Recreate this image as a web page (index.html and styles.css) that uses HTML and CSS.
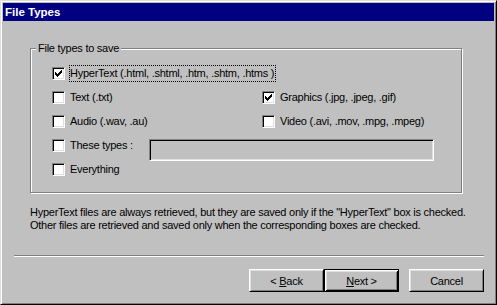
FILE: index.html
```html
<!DOCTYPE html>
<html>
<head>
<meta charset="utf-8">
<title>File Types</title>
<link rel="stylesheet" href="styles.css">
</head>
<body>
<div class="window">
  <div class="titlebar">File Types</div>
  <div class="body">
    <div class="group">
      <span class="legend">File types to save</span>
      <div class="grid">
        <label class="opt span2"><span class="cb"><svg viewBox="0 0 7 7" width="7" height="7" shape-rendering="crispEdges"><path d="M6 0h1v1h-1zM5 1h2v1h-2zM0 2h1v1h-1zM4 2h3v1h-3zM0 3h2v1h-2zM3 3h3v1h-3zM0 4h5v1h-5zM1 5h3v1h-3zM2 6h1v1h-1z" fill="#000"/></svg></span><span class="lbl focus">HyperText (.html, .shtml, .htm, .shtm, .htms )</span></label>
        <label class="opt"><span class="cb"></span><span class="lbl">Text (.txt)</span></label>
        <label class="opt"><span class="cb"><svg viewBox="0 0 7 7" width="7" height="7" shape-rendering="crispEdges"><path d="M6 0h1v1h-1zM5 1h2v1h-2zM0 2h1v1h-1zM4 2h3v1h-3zM0 3h2v1h-2zM3 3h3v1h-3zM0 4h5v1h-5zM1 5h3v1h-3zM2 6h1v1h-1z" fill="#000"/></svg></span><span class="lbl">Graphics (.jpg, .jpeg, .gif)</span></label>
        <label class="opt"><span class="cb"></span><span class="lbl">Audio (.wav, .au)</span></label>
        <label class="opt"><span class="cb"></span><span class="lbl">Video (.avi, .mov, .mpg, .mpeg)</span></label>
        <div class="opt span2"><span class="cb"></span><span class="lbl types-lbl">These types :</span><span class="edit"></span></div>
        <label class="opt span2"><span class="cb"></span><span class="lbl">Everything</span></label>
      </div>
    </div>
    <p class="desc">HyperText files are always retrieved, but they are saved only if the "HyperText" box is checked.<br>Other files are retrieved and saved only when the corresponding boxes are checked.</p>
    <div class="sep"></div>
    <div class="buttons">
      <button class="btn">&lt; <u>B</u>ack</button>
      <button class="btn default"><u>N</u>ext &gt;</button>
      <button class="btn cancel">Cancel</button>
    </div>
  </div>
</div>
</body>
</html>
```

FILE: styles.css
```css
html, body {
  margin: 0;
  padding: 0;
  background: #c0c0c0;
}

body {
  font-family: "Liberation Sans", Arial, sans-serif;
  font-size: 11px;
  letter-spacing: -0.25px;
  color: #000;
}

.window {
  width: 497px;
  height: 305px;
  box-sizing: border-box;
  border: 1px solid;
  border-color: #dfdfdf #000 #000 #dfdfdf;
  box-shadow: inset 1px 1px 0 #fff, inset -1px -1px 0 #808080;
  padding: 2px;
  background: #c0c0c0;
}

.titlebar {
  height: 18px;
  line-height: 18px;
  background: #000080;
  color: #fff;
  font-weight: bold;
  font-size: 11.5px;
  letter-spacing: 0;
  padding-left: 2px;
}

.body {
  display: flex;
  flex-direction: column;
}

.group {
  position: relative;
  margin: 27px 0 0 27px;
  width: 432px;
  height: 145px;
  box-sizing: border-box;
  border: 1px solid #808080;
  box-shadow: 1px 1px 0 #fff, inset 1px 1px 0 #fff;
  padding: 18px 0 0 21px;
}

.legend {
  position: absolute;
  top: -7px;
  left: 5px;
  padding: 0 2px;
  line-height: 13px;
  background: #c0c0c0;
}

.grid {
  display: grid;
  grid-template-columns: 210px auto;
  grid-auto-rows: 13px;
  row-gap: 11px;
}

.span2 {
  grid-column: span 2;
}

.opt {
  display: flex;
  align-items: center;
  gap: 5px;
}

.cb {
  width: 13px;
  height: 13px;
  box-sizing: border-box;
  border: 1px solid;
  border-color: #808080 #fff #fff #808080;
  box-shadow: inset 1px 1px 0 #000, inset -1px -1px 0 #dfdfdf;
  background: #fff;
  padding: 2px;
  display: flex;
  flex: none;
}

.cb svg {
  display: block;
}

.lbl {
  line-height: 13px;
  white-space: nowrap;
}

.lbl.focus {
  border: 1px dotted #000;
  padding: 1px 1px 1px 0;
  margin-left: -1px;
}

.types-lbl {
  width: 74px;
}

.edit {
  align-self: flex-start;
  width: 285px;
  height: 22px;
  box-sizing: border-box;
  border: 1px solid;
  border-color: #808080 #fff #fff #808080;
  box-shadow: inset 1px 1px 0 #000, inset -1px -1px 0 #dfdfdf;
  background: #c0c0c0;
}

.desc {
  margin: 13px 0 0 27px;
  line-height: 13px;
  white-space: nowrap;
}

.sep {
  margin: 23px 0 0 11px;
  width: 470px;
  height: 0;
  border-top: 1px solid #808080;
  border-bottom: 1px solid #fff;
}

.buttons {
  display: flex;
  justify-content: flex-end;
  margin: 12px 0 0 11px;
  width: 470px;
}

.btn {
  width: 75px;
  height: 23px;
  box-sizing: border-box;
  margin: 0;
  padding: 0;
  font-family: "Liberation Sans", Arial, sans-serif;
  font-size: 11px;
  letter-spacing: -0.25px;
  color: #000;
  background: #c0c0c0;
  border: 1px solid;
  border-color: #fff #000 #000 #fff;
  box-shadow: inset 1px 1px 0 #dfdfdf, inset -1px -1px 0 #808080;
}

.btn.default {
  border-color: #000;
  box-shadow: inset 1px 1px 0 #fff, inset -1px -1px 0 #000, inset 2px 2px 0 #dfdfdf, inset -2px -2px 0 #808080;
}

.btn.cancel {
  margin-left: 10px;
}

.btn u {
  text-underline-offset: 1px;
}
```
